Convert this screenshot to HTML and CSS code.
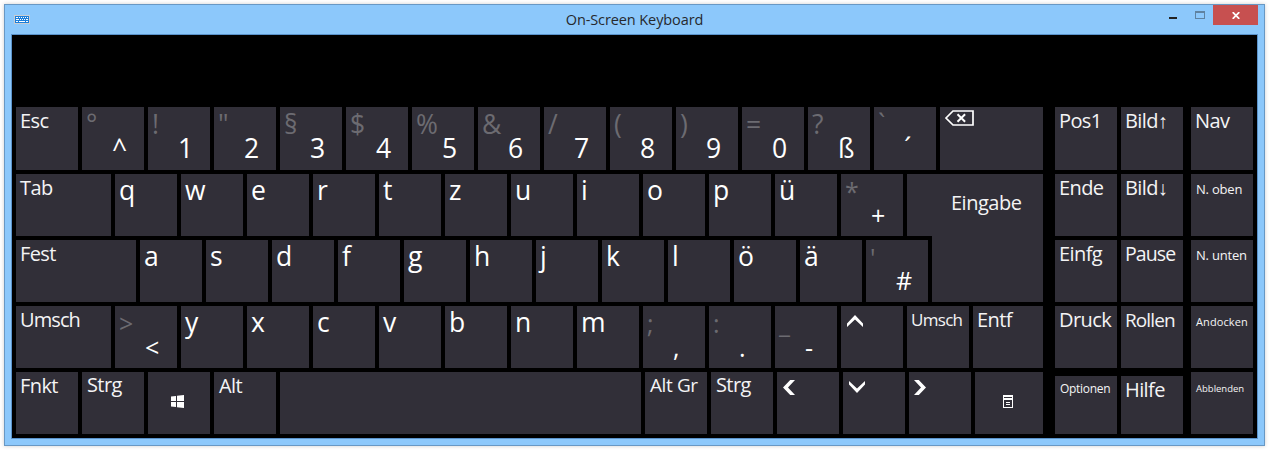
FILE: index.html
```
<!DOCTYPE html>
<html lang="de">
<head>
<meta charset="utf-8">
<title>On-Screen Keyboard</title>
<link rel="stylesheet" href="styles.css">
</head>
<body>
<div class="window">
  <header class="titlebar">
    <svg class="app-icon" width="16" height="10" viewBox="0 0 16 10" shape-rendering="crispEdges">
      <path fill="#c9ccd0" d="M0 0h16v9h-16z"/><path fill="#1b7fdc" d="M1 1h14v7H1z"/>
      <path stroke="#fff" d="M2 2.5h2M5 2.5h1M7 2.5h1M9 2.5h1M11 2.5h1M13 2.5h1M2 4.5h3M6 4.5h1M8 4.5h1M10 4.5h1M12 4.5h2M2 6.5h2M5 6.5h6M12 6.5h2"/>
    </svg>
    <h1 class="title">On-Screen Keyboard</h1>
    <div class="controls">
      <svg class="min" width="8" height="2"><path fill="#222" d="M0 0h8v2H0z"/></svg>
      <svg class="max" width="10" height="8" shape-rendering="crispEdges"><path fill="#5f82a0" fill-rule="evenodd" d="M0 0h10v8H0zM1 2v5h8V2z"/></svg>
      <div class="close"><svg width="8" height="7" viewBox="0 0 8 7"><path d="M.7.2l6.6 6.6M7.3.2L.7 6.8" stroke="#fff" stroke-width="1.8"/></svg></div>
    </div>
  </header>
  <main class="board">
    <section class="block main-keys">
      <div class="row first">
        <div class="key word">Esc</div>
        <div class="key dual"><i>°</i><b>^</b></div>
        <div class="key dual"><i>!</i><b>1</b></div>
        <div class="key dual"><i>"</i><b>2</b></div>
        <div class="key dual"><i>§</i><b>3</b></div>
        <div class="key dual"><i>$</i><b>4</b></div>
        <div class="key dual"><i>%</i><b>5</b></div>
        <div class="key dual"><i>&amp;</i><b>6</b></div>
        <div class="key dual"><i>/</i><b>7</b></div>
        <div class="key dual"><i>(</i><b>8</b></div>
        <div class="key dual"><i>)</i><b>9</b></div>
        <div class="key dual"><i>=</i><b>0</b></div>
        <div class="key dual"><i>?</i><b>ß</b></div>
        <div class="key dual"><i>`</i><b>´</b></div>
        <div class="key fill backspace"><svg width="29" height="16" viewBox="0 0 29 16" fill="none" stroke="#fff"><path stroke-width="1.7" d="M1 8L8 1H28V15H8Z"/><path stroke-width="2" d="M12.5 4.3l7.6 7.4M20.1 4.3l-7.6 7.4"/></svg></div>
      </div>
      <div class="middle">
        <div class="block middle-left">
          <div class="row">
            <div class="key word w-tab">Tab</div>
            <div class="key letter">q</div><div class="key letter">w</div><div class="key letter">e</div><div class="key letter">r</div><div class="key letter">t</div><div class="key letter">z</div><div class="key letter">u</div><div class="key letter">i</div><div class="key letter">o</div><div class="key letter">p</div><div class="key letter">ü</div>
            <div class="key dual small"><i>*</i><b>+</b></div>
          </div>
          <div class="row">
            <div class="key word w-caps">Fest</div>
            <div class="key letter">a</div><div class="key letter">s</div><div class="key letter">d</div><div class="key letter">f</div><div class="key letter">g</div><div class="key letter">h</div><div class="key letter">j</div><div class="key letter">k</div><div class="key letter">l</div><div class="key letter">ö</div><div class="key letter">ä</div>
            <div class="key dual small hash"><i>'</i><b>#</b></div>
          </div>
        </div>
        <div class="key word enter">Eingabe</div>
      </div>
      <div class="row">
        <div class="key word w-tab umsch">Umsch</div>
        <div class="key dual small"><i>&gt;</i><b>&lt;</b></div>
        <div class="key letter">y</div><div class="key letter">x</div><div class="key letter">c</div><div class="key letter">v</div><div class="key letter">b</div><div class="key letter">n</div><div class="key letter">m</div>
        <div class="key dual small"><i>;</i><b>,</b></div>
        <div class="key dual small"><i>:</i><b>.</b></div>
        <div class="key dual small"><i>_</i><b>-</b></div>
        <div class="key arrow up"><svg width="16" height="12" viewBox="0 0 16 12"><path d="M0 8.4L8 0l8 8.4V12L8 4.6 0 12z"/></svg></div>
        <div class="key word s17">Umsch</div>
        <div class="key word fill">Entf</div>
      </div>
      <div class="row">
        <div class="key word">Fnkt</div>
        <div class="key word strg">Strg</div>
        <div class="key centered win"><svg width="13" height="13" viewBox="0 0 13 13" fill="#fff"><path d="M0 1.5L5 .9V6H0zM6 .7L13 0v6H6zM0 7h5v5.1L0 11.5zM6 7h7v6l-7-.8z"/></svg></div>
        <div class="key word alt">Alt</div>
        <div class="key space"></div>
        <div class="key word altgr">Alt Gr</div>
        <div class="key word strg">Strg</div>
        <div class="key arrow left"><svg width="12" height="15" viewBox="0 0 12 16" preserveAspectRatio="none"><path d="M7.2 0H12L5 8l7 8H7.2L0 8z"/></svg></div>
        <div class="key arrow down"><svg width="16" height="12" viewBox="0 0 16 12"><path d="M0 0l8 7.4L16 0v3.6L8 12 0 3.6z"/></svg></div>
        <div class="key arrow left right"><svg width="12" height="15" viewBox="0 0 12 16" preserveAspectRatio="none"><path d="M0 0h4.8L12 8l-7.2 8H0l7-8z"/></svg></div>
        <div class="key centered fill"><svg width="10" height="13" viewBox="0 0 10 13" shape-rendering="crispEdges"><path fill="#fff" fill-rule="evenodd" d="M0 0h10v13H0zM1 2v1h8V2zM1 5v7h8V5z"/><path stroke="#fff" d="M3 7.5h4M3 9.5h4"/></svg></div>
      </div>
    </section>
    <section class="block nav-keys">
      <div class="row first"><div class="key word">Pos1</div><div class="key word">Bild<span class="ar">↑</span></div></div>
      <div class="row"><div class="key word">Ende</div><div class="key word">Bild<span class="ar">↓</span></div></div>
      <div class="row"><div class="key word einfg">Einfg</div><div class="key word pause">Pause</div></div>
      <div class="row"><div class="key word druck">Druck</div><div class="key word rollen">Rollen</div></div>
      <div class="row short"><div class="key word s12">Optionen</div><div class="key word">Hilfe</div></div>
    </section>
    <section class="block tool-keys">
      <div class="row first"><div class="key word">Nav</div></div>
      <div class="row"><div class="key word s13">N. oben</div></div>
      <div class="row"><div class="key word s13">N. unten</div></div>
      <div class="row"><div class="key word s11">Andocken</div></div>
      <div class="row"><div class="key word s9">Abblenden</div></div>
    </section>
  </main>
</div>
</body>
</html>
```
FILE: styles.css
```
* { box-sizing: border-box; }
body {
  margin: 0;
  padding: 4px;
  width: 1269px;
  height: 450px;
  background: #fff;
  font-family: "Open Sans", "Noto Sans", sans-serif;
}
.window {
  width: 1261px;
  height: 442px;
  padding: 0 6px;
  border: 1px solid #6898c4;
  background: #8cc8fb;
  box-shadow: 0 0 4px rgba(0, 0, 0, .2);
}
.titlebar {
  display: grid;
  grid-template-columns: 1fr auto 1fr;
  height: 29px;
}
.app-icon { margin: 10px 0 0 3px; }
.title {
  margin: 0;
  font-size: 14.5px;
  font-weight: 400;
  line-height: 29px;
  letter-spacing: -.1px;
  color: #26292d;
}
.controls { display: flex; justify-content: flex-end; align-items: flex-start; }
.min { margin: 12px 18px 0 0; }
.max { margin: 6px 8px 0 0; }
.close {
  display: flex;
  align-items: center;
  justify-content: center;
  width: 45px;
  height: 20px;
  background: #c75050;
}
.board {
  display: flex;
  width: 1247px;
  height: 405px;
  padding: 72px 4px 4px;
  border: 1px solid #5b93cb;
  background: #000;
}
.block { display: flex; flex-direction: column; gap: 4px; }
.main-keys { width: 1027px; }
.nav-keys { margin-left: 12px; }
.tool-keys { margin-left: 8px; }
.row { display: flex; gap: 4px; height: 62px; }
.row.first { height: 63px; }
.row.short { padding-top: 4px; }
.middle { display: flex; }
.middle-left { width: 912px; }
.key {
  flex: none;
  width: 62px;
  padding-left: 4px;
  background: #312f38;
  color: #fff;
  white-space: nowrap;
}
.key.fill { flex: 1; }
.key.w-tab { width: 95px; }
.key.w-caps { width: 120px; }
.key.space { width: 361px; }
.key.enter {
  width: 136px;
  margin-left: -21px;
  padding: 15px 0 0 44px;
  letter-spacing: -.5px;
  clip-path: polygon(0 0, 100% 0, 100% 100%, 25px 100%, 25px 62px, 0 62px);
}
.word { font-size: 20px; line-height: 27px; letter-spacing: -.6px; color: #f4f4f5; }
.letter { font-size: 26.5px; line-height: 32px; }
.dual { font-size: 26.5px; }
.dual i, .dual b { display: block; height: 25px; line-height: 34px; font-style: normal; font-weight: 400; }
.dual i { color: #6c6b71; }
.dual b { padding-left: 26px; line-height: 33px; }
.dual.small { font-size: 25px; }
.hash b { line-height: 30px; }
.arrow { padding: 9px 0 0 6px; fill: #fff; }
.arrow.left { padding-top: 8px; }
.arrow.right { padding-left: 5px; }
.arrow svg, .backspace svg, .centered svg { display: block; }
.backspace { padding: 3px 0 0 5px; }
.centered { padding: 23px 0 0 28px; }
.win { padding-left: 23px; }
.umsch { letter-spacing: -.9px; }
.strg { padding-left: 5px; line-height: 25px; }
.alt { padding-left: 5px; }
.altgr { padding-left: 5px; font-size: 19px; letter-spacing: -.4px; }
.pause { font-size: 19.5px; letter-spacing: -.9px; }
.rollen { font-size: 19px; letter-spacing: -.9px; line-height: 28px; }
.s17 { font-size: 17px; line-height: 28px; letter-spacing: -.7px; }
.s13 { padding-left: 5px; font-size: 13px; line-height: 30px; letter-spacing: -.2px; }
.s12 { padding-left: 5px; font-size: 12px; line-height: 26px; letter-spacing: -.3px; }
.s11 { padding-left: 5px; font-size: 11px; line-height: 32px; letter-spacing: .1px; }
.s9 { padding-left: 5px; font-size: 9.5px; line-height: 33px; letter-spacing: 0; }
```
